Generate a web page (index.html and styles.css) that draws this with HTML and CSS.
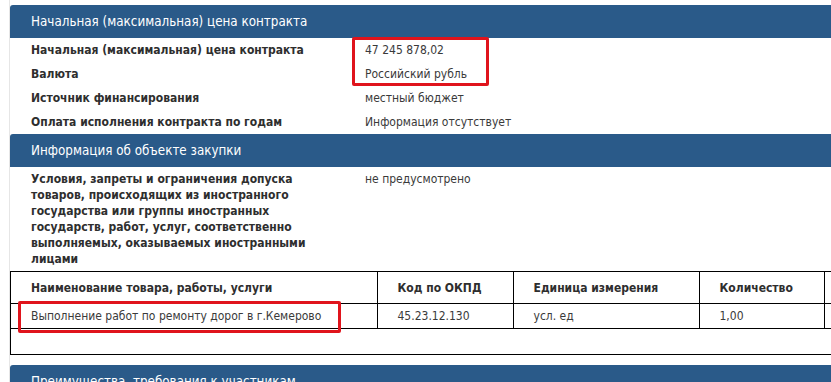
FILE: index.html
```html
<!DOCTYPE html>
<html lang="ru">

<head>
  <meta charset="UTF-8">
  <title>Сведения о закупке</title>
  <link rel="stylesheet" href="styles.css">
</head>

<body>
  <div class="page">
    <section class="block">
      <h2 class="block-title">Начальная (максимальная) цена контракта</h2>
      <div class="info-row">
        <div class="info-label">Начальная (максимальная) цена контракта</div>
        <div class="info-value">47 245 878,02</div>
      </div>
      <div class="info-row">
        <div class="info-label">Валюта</div>
        <div class="info-value">Российский рубль</div>
      </div>
      <div class="info-row">
        <div class="info-label">Источник финансирования</div>
        <div class="info-value">местный бюджет</div>
      </div>
      <div class="info-row">
        <div class="info-label">Оплата исполнения контракта по годам</div>
        <div class="info-value">Информация отсутствует</div>
      </div>
    </section>

    <section class="block">
      <h2 class="block-title">Информация об объекте закупки</h2>
      <div class="info-row">
        <div class="info-label">Условия, запреты и ограничения допуска товаров, происходящих из иностранного государства или группы иностранных государств, работ, услуг, соответственно выполняемых, оказываемых иностранными лицами</div>
        <div class="info-value">не предусмотрено</div>
      </div>
      <div class="goods">
        <table class="goods-table">
          <colgroup>
            <col class="col-name">
            <col class="col-code">
            <col class="col-unit">
            <col class="col-qty">
            <col>
          </colgroup>
          <thead>
            <tr>
              <th>Наименование товара, работы, услуги</th>
              <th>Код по ОКПД</th>
              <th>Единица измерения</th>
              <th>Количество</th>
              <th></th>
            </tr>
          </thead>
          <tbody>
            <tr>
              <td>Выполнение работ по ремонту дорог в г.Кемерово</td>
              <td>45.23.12.130</td>
              <td>усл. ед</td>
              <td>1,00</td>
              <td></td>
            </tr>
          </tbody>
        </table>
      </div>
    </section>

    <section class="block">
      <h2 class="block-title">Преимущества, требования к участникам</h2>
    </section>

    <!-- red annotation frames -->
    <div class="mark mark-price"></div>
    <div class="mark mark-goods"></div>
  </div>
</body>

</html>
```

FILE: styles.css
```css
body {
  margin: 0;
  font-family: "DejaVu Sans Condensed", "DejaVu Sans", Verdana, sans-serif;
  font-size: 12px;
  color: #333;
  background: #fff;
  overflow: hidden;
}

.page {
  position: relative;
  width: 900px;
  min-height: 400px;
  margin-left: 9px;
  padding-top: 5px;
  border-left: 1px solid #e6e6e6;
}

.block-title {
  margin: 0;
  height: 33px;
  padding-left: 21px;
  line-height: 33px;
  font-size: 13.3px;
  font-weight: normal;
  color: #fff;
  background: #2a5a89;
  border-radius: 3px 0 0 0;
}

.info-row {
  display: flex;
  padding: 4px 0 4px 21px;
  line-height: 16px;
}

.info-label {
  width: 290px;
  margin-right: 44px;
  font-weight: bold;
  color: #2e2e2e;
}

.info-value {
  color: #3a3a3a;
}

.goods {
  margin-top: 0;
  margin-bottom: 10px;
  padding-bottom: 25px;
  border: 1px solid #000;
  border-right: none;
}

.goods-table {
  width: 100%;
  table-layout: fixed;
  border-collapse: collapse;
}

.col-name { width: 366px; }
.col-code { width: 136px; }
.col-unit { width: 186px; }
.col-qty { width: 125px; }

.goods-table th,
.goods-table td {
  padding: 0 0 0 20px;
  text-align: left;
  border-left: 1px solid #000;
  border-bottom: 1px solid #000;
  white-space: nowrap;
  overflow: hidden;
}

.goods-table th:first-child,
.goods-table td:first-child {
  border-left: none;
}

.goods-table th {
  height: 31px;
  font-weight: bold;
  color: #2e2e2e;
}

.goods-table td {
  height: 24px;
  color: #3a3a3a;
}

.mark {
  position: absolute;
  border: 3px solid #e0141c;
  border-radius: 2px;
}

.mark-price {
  left: 342px;
  top: 37px;
  width: 131px;
  height: 43px;
}

.mark-goods {
  left: 8px;
  top: 301px;
  width: 317px;
  height: 26px;
}
```
